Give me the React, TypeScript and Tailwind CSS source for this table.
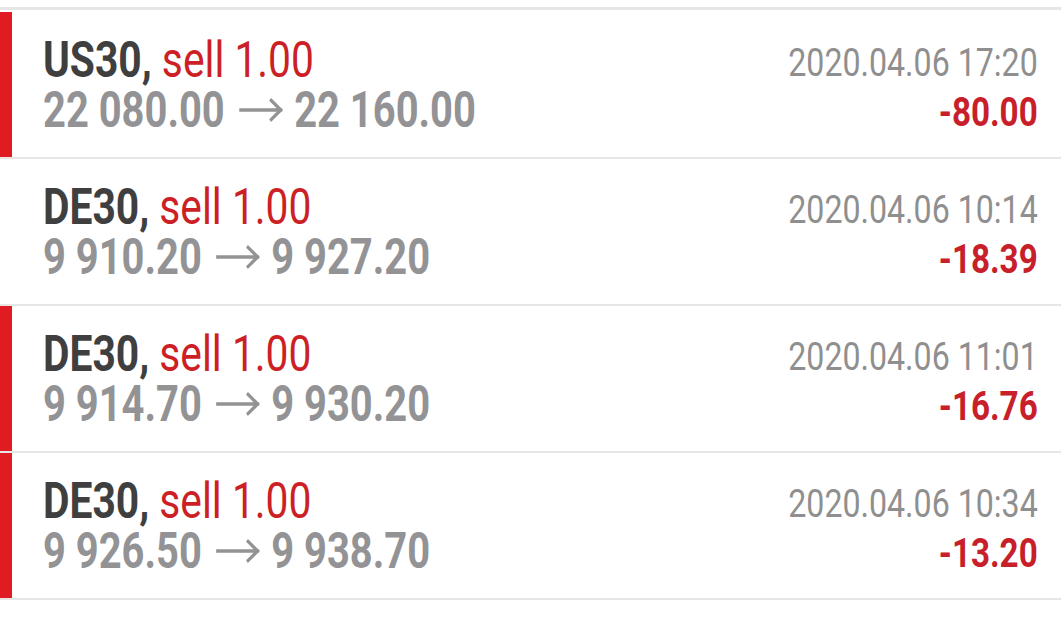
import React from "react";

interface Trade {
  symbol: string;
  side: string;
  open: string;
  close: string;
  time: string;
  profit: string;
  marked: boolean;
}

const trades: Trade[] = [
  { symbol: "US30", side: "sell 1.00", open: "22 080.00", close: "22 160.00", time: "2020.04.06 17:20", profit: "-80.00", marked: true },
  { symbol: "DE30", side: "sell 1.00", open: "9 910.20", close: "9 927.20", time: "2020.04.06 10:14", profit: "-18.39", marked: false },
  { symbol: "DE30", side: "sell 1.00", open: "9 914.70", close: "9 930.20", time: "2020.04.06 11:01", profit: "-16.76", marked: true },
  { symbol: "DE30", side: "sell 1.00", open: "9 926.50", close: "9 938.70", time: "2020.04.06 10:34", profit: "-13.20", marked: true },
];

const Arrow = () => (
  <svg width="55" height="26" viewBox="0 0 55 26" className="ml-[18px] mr-[14px] shrink-0" fill="none">
    <path d="M1 13H52M40 3.5L52 13L40 22.5" stroke="#939393" strokeWidth="3.6" strokeLinecap="square" />
  </svg>
);

// no Roboto Condensed installed, so Roboto lines get squeezed horizontally
const TradeRow = ({ trade }: { trade: Trade }) => (
  <div className="flex h-[147px] border-b-2 border-[#e6e6e6]">
    <div className={trade.marked ? "w-3 bg-[#e01b22]" : "w-3"} />
    <div className="flex flex-1 items-center justify-between pl-[31px] pr-[23px]">
      <div className="leading-[50px]">
        <div className="origin-left whitespace-nowrap text-[50px] [transform:scaleX(0.815)]">
          <span className="font-bold text-[#3f3f3f]">{trade.symbol},</span>{" "}
          <span className="text-[#cc1f26]">{trade.side}</span>
        </div>
        <div className="flex origin-left items-center whitespace-nowrap text-[50px] font-bold text-[#939396] [transform:scaleX(0.798)]">
          <span>{trade.open}</span>
          <Arrow />
          <span>{trade.close}</span>
        </div>
      </div>
      <div className="pt-[6px] text-right leading-[50px]">
        <div className="origin-right whitespace-nowrap text-[39px] text-[#8f8f8f] [transform:scaleX(0.824)]">{trade.time}</div>
        <div className="origin-right whitespace-nowrap text-[40px] font-bold text-[#c8202a] [transform:scaleX(0.83)]">{trade.profit}</div>
      </div>
    </div>
  </div>
);

export default function App() {
  return (
    <div className="min-h-screen bg-white pt-[7px] font-['Roboto',sans-serif]">
      <div className="h-[3px] bg-[#e6e6e6]" />
      <div className="pt-[2px]">
        {trades.map((t, i) => (
          <TradeRow key={i} trade={t} />
        ))}
      </div>
    </div>
  );
}
